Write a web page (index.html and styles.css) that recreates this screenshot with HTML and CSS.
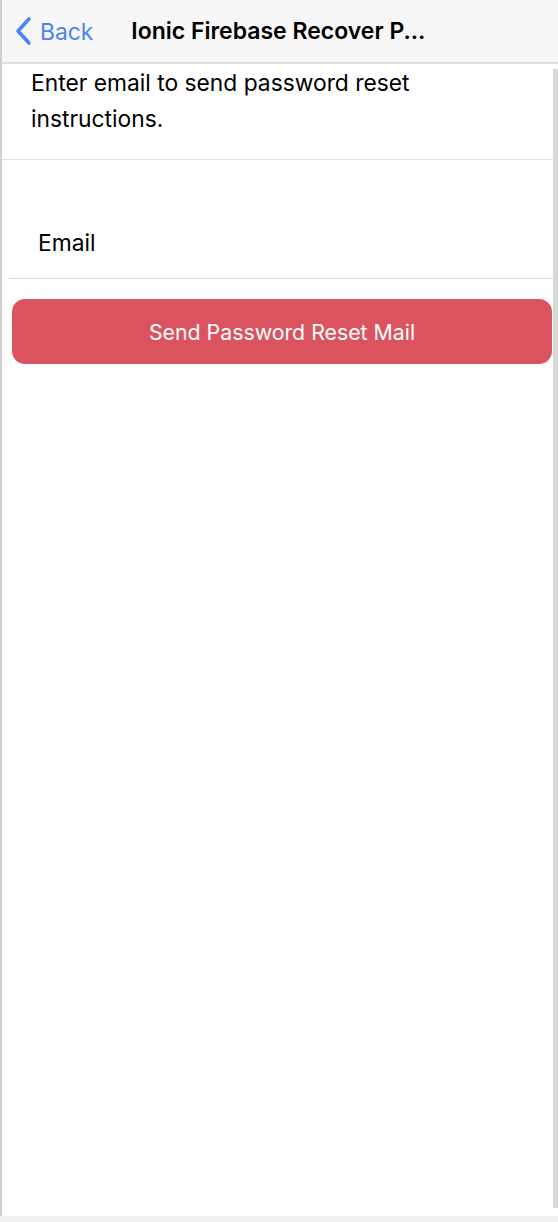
FILE: index.html
```html
<!DOCTYPE html>
<html>
<head>
<meta charset="utf-8">
<link rel="stylesheet" href="styles.css">
</head>
<body>
<div class="frame">
  <header class="toolbar">
    <a class="back">
      <svg class="chev" width="18" height="30" viewBox="0 0 18 30"><path d="M15 3 L4 15 L15 27" fill="none" stroke="#4a84f2" stroke-width="3.6" stroke-linecap="round" stroke-linejoin="round"/></svg>
      <span class="back-text">Back</span>
    </a>
    <h1 class="title">Ionic Firebase Recover P...</h1>
  </header>
  <div class="body">
    <main class="content">
      <p class="intro">Enter email to send password reset instructions.</p>
      <div class="item">
        <label class="label">Email</label>
      </div>
      <button class="btn">Send Password Reset Mail</button>
    </main>
    <div class="scroll"></div>
  </div>
</div>
<div class="bottom"></div>
</body>
</html>
```
FILE: styles.css
```css
html, body { margin: 0; padding: 0; background: #fff; }
body { font-family: Inter, "Liberation Sans", Arial, sans-serif; width: 558px; height: 1222px; overflow: hidden; }
.frame { height: 1216px; border-left: 2px solid #d0d0d0; box-sizing: border-box; display: flex; flex-direction: column; }
.toolbar { height: 62px; background: #f7f7f7; border-bottom: 2px solid #e0e0e0; display: flex; align-items: center; flex-shrink: 0; }
.back { display: flex; align-items: center; margin-left: 12px; color: #4a84f2; }
.chev { display: block; }
.back-text { font-size: 22.8px; margin-left: 8px; }
.title { margin: 0 0 0 38px; font-size: 23px; font-weight: 600; color: #000; }
.body { flex: 1; display: flex; }
.content { flex: 1; display: flex; flex-direction: column; }
.scroll { width: 5px; background: #d8d8d8; margin: 5px 0 8px; }
.intro { margin: 0; padding: 1px 60px 22px 29px; font-size: 22.8px; line-height: 36px; color: #000; border-bottom: 1px solid #e3e3e3; }
.item { margin: 0 0 0 7px; height: 119px; border-bottom: 1px solid #dcdcdc; display: flex; align-items: flex-end; padding-bottom: 22px; box-sizing: border-box; }
.label { font-size: 22.8px; color: #000; margin-left: 29px; }
.btn { margin: 20px 1px 0 10px; height: 65px; border: none; border-radius: 13px; background: #dc5360; color: #fff; font-family: Inter, "Liberation Sans", Arial, sans-serif; font-size: 21.3px; padding: 0; }
.bottom { height: 6px; background: #f0f1f0; }
```
